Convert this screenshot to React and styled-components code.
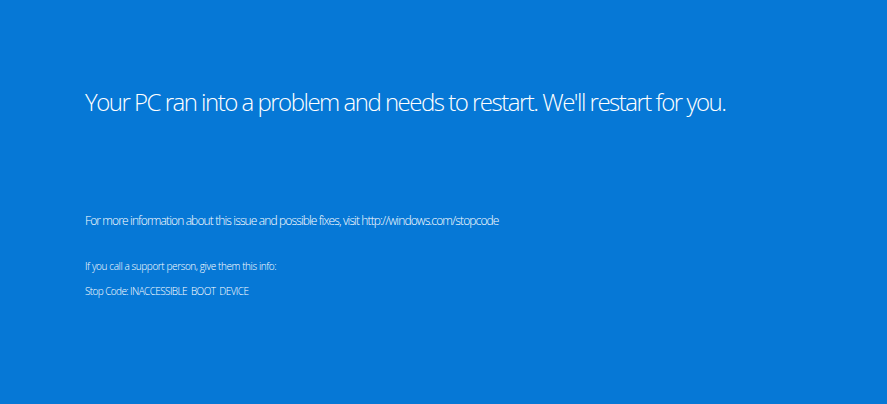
import React from 'react'
import styled, { createGlobalStyle } from 'styled-components'

const Global = createGlobalStyle`
	html, body {
		margin: 0;
		padding: 0;
		background: #0678d6;
	}
`

const Screen = styled.div`
	width: 887px;
	height: 404px;
	box-sizing: border-box;
	padding: 86px 0 0 85px;
	background: #0678d6;
	color: #ffffff;
	font-family: "Open Sans", "Noto Sans", sans-serif;
	font-weight: 300;
	overflow: hidden;
`

const Headline = styled.h1`
	margin: 0;
	font-size: 24px;
	font-weight: 300;
	line-height: 32px;
	letter-spacing: -1.5px;
	white-space: nowrap;
`

const Info = styled.p`
	margin: ${p => p.top}px 0 0;
	font-size: ${p => p.size}px;
	line-height: ${p => p.size + 4}px;
	letter-spacing: ${p => p.spacing}px;
	white-space: pre;
`

export default function App() {
	return (
		<>
			<Global />
			<Screen>
				<Headline>Your PC ran into a problem and needs to restart. We'll restart for you.</Headline>
				<Info top={95} size={12} spacing={-0.87}>
					For more information about this issue and possible fixes, visit http://windows.com/stopcode
				</Info>
				<Info top={30} size={10} spacing={-0.4}>
					If you call a support person, give them this info:
				</Info>
				<Info top={11} size={10} spacing={-0.6}>
					Stop Code: INACCESSIBLE  BOOT  DEVICE
				</Info>
			</Screen>
		</>
	)
}
